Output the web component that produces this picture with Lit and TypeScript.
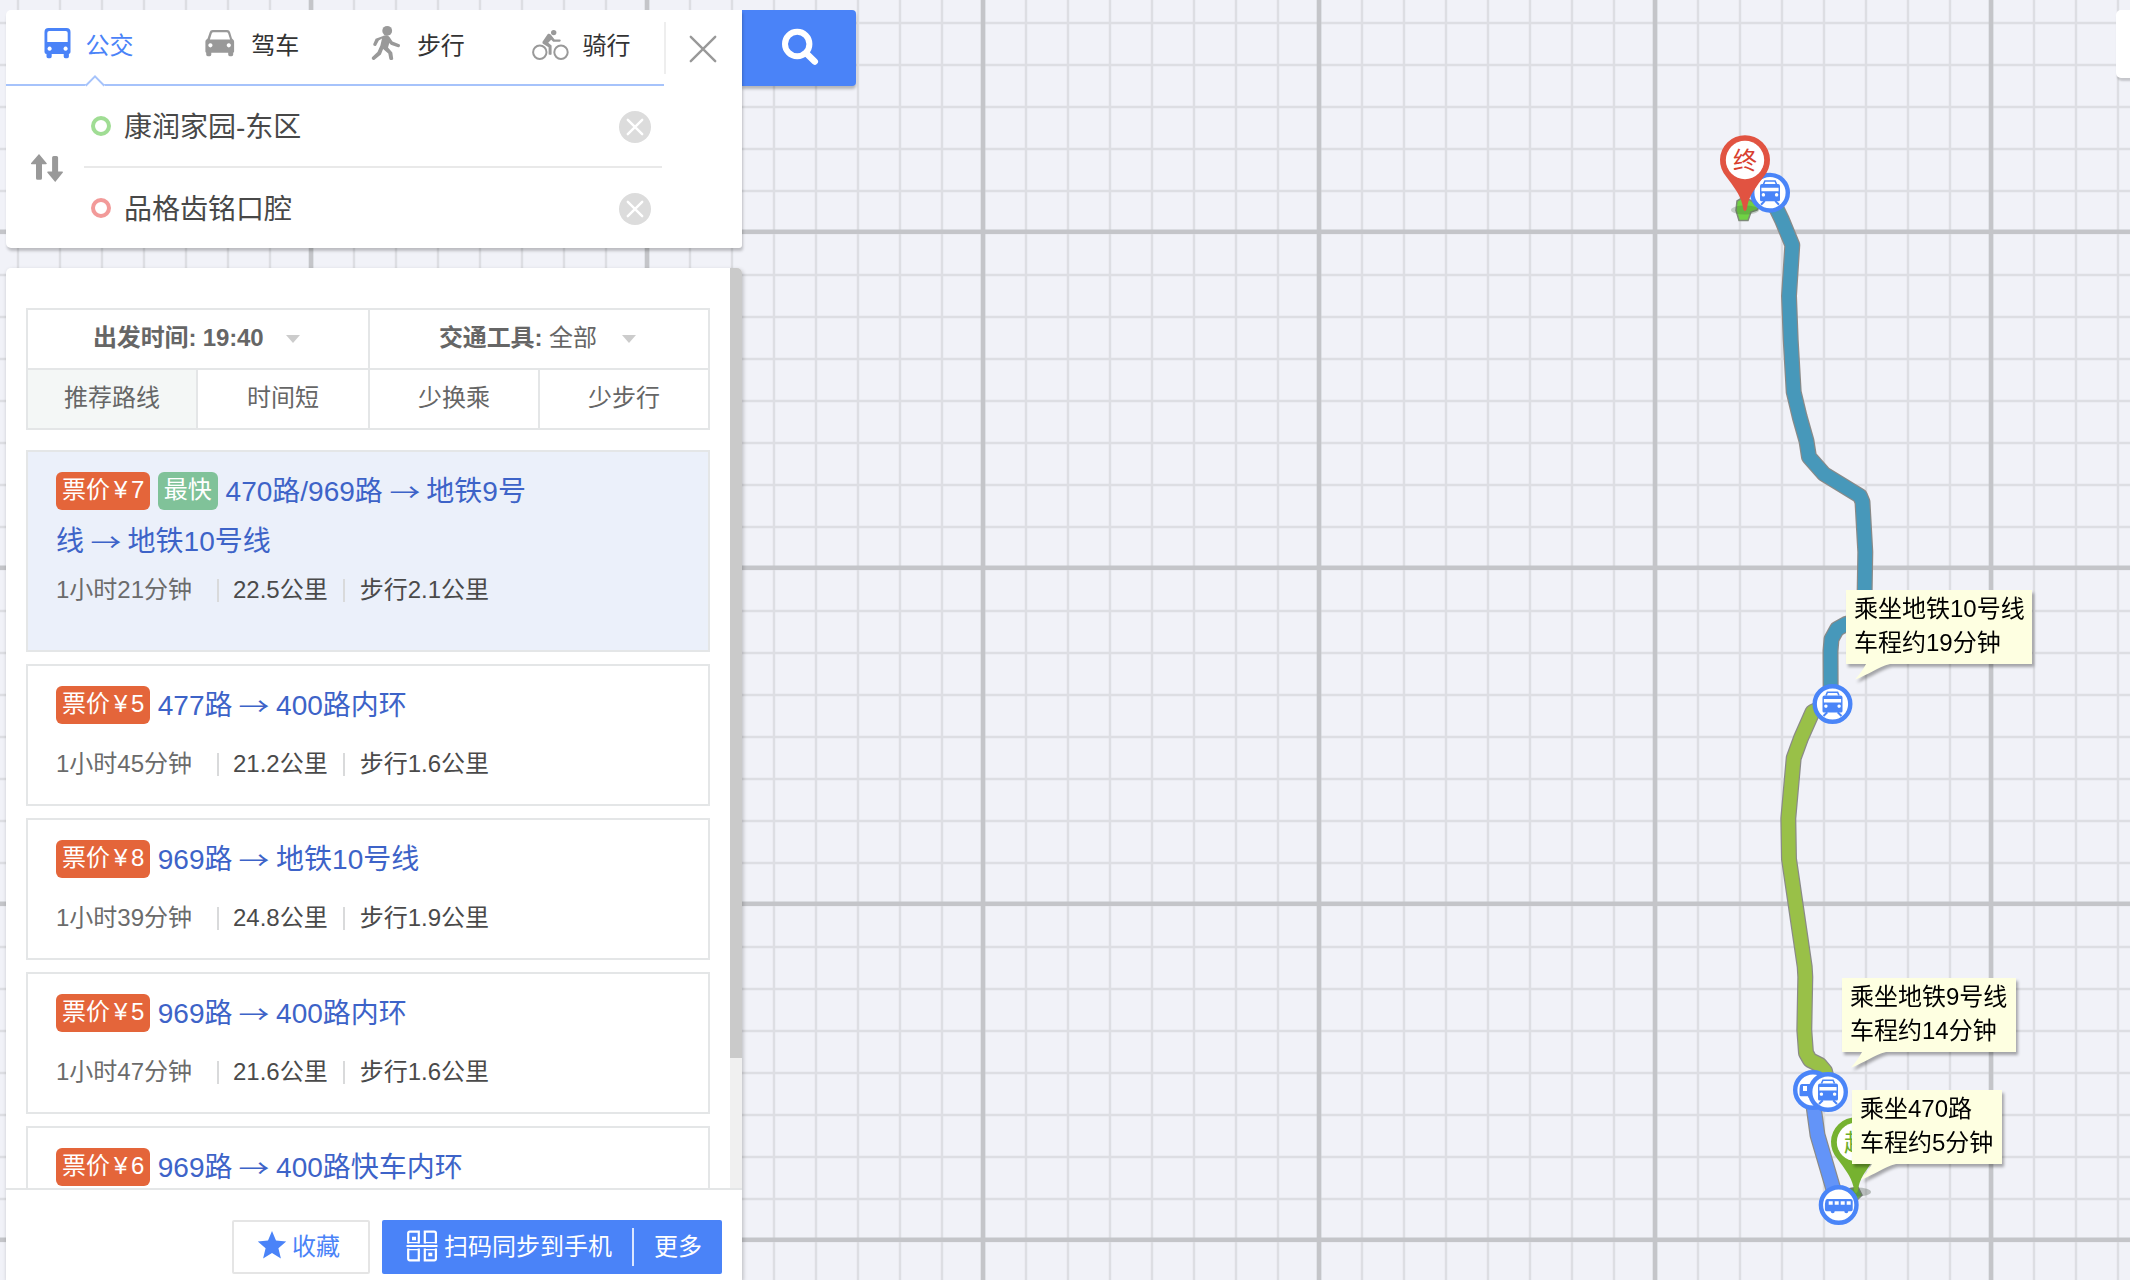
import { LitElement, html, css, svg, nothing } from "lit";
import { customElement, property } from "lit/decorators.js";
import { classMap } from "lit/directives/class-map.js";

interface Route {
  price: number;
  fastest?: boolean;
  steps: string[];
  time?: string;
  distance?: string;
  walk?: string;
  active?: boolean;
}

const ROUTES: Route[] = [
  { price: 7, fastest: true, active: true, steps: ["470路/969路", "地铁9号线", "地铁10号线"], time: "1小时21分钟", distance: "22.5公里", walk: "步行2.1公里" },
  { price: 5, steps: ["477路", "400路内环"], time: "1小时45分钟", distance: "21.2公里", walk: "步行1.6公里" },
  { price: 8, steps: ["969路", "地铁10号线"], time: "1小时39分钟", distance: "24.8公里", walk: "步行1.9公里" },
  { price: 5, steps: ["969路", "400路内环"], time: "1小时47分钟", distance: "21.6公里", walk: "步行1.6公里" },
  { price: 6, steps: ["969路", "400路快车内环"] },
];

const busIcon = svg`
  <path fill-rule="evenodd" d="M18.5 6h18a4 4 0 0 1 4 4v20a2 2 0 0 1-1.6 2v2.6a1.6 1.6 0 0 1-1.6 1.6h-2a1.6 1.6 0 0 1-1.6-1.6V32H21.7v2.6a1.6 1.6 0 0 1-1.6 1.6h-2a1.6 1.6 0 0 1-1.6-1.6V32a2 2 0 0 1-2-2V10a4 4 0 0 1 4-4z
    M19.3 9a2 2 0 0 0-2 2v9h20.4v-9a2 2 0 0 0-2-2z
    M19.6 24.6a2.1 2.1 0 1 0 .01 0z M35.6 24.6a2.1 2.1 0 1 0 .01 0z"/>`;
const carIcon = svg`
  <path fill-rule="evenodd" d="M17.6 8h14.6a3 3 0 0 1 2.9 2.2l1.9 6.3 1.5 1.6a2.5 2.5 0 0 1 .6 1.7v9.6a1.5 1.5 0 0 1-.9 1.4v1.8a1.6 1.6 0 0 1-1.6 1.6h-1.8a1.6 1.6 0 0 1-1.6-1.6v-1.9H16.3v1.9a1.6 1.6 0 0 1-1.6 1.6h-1.9a1.6 1.6 0 0 1-1.6-1.6v-1.9a1.5 1.5 0 0 1-.8-1.3v-9.6a2.5 2.5 0 0 1 .6-1.7l1.6-1.6 2.1-6.3A3 3 0 0 1 17.6 8z
    M18.4 10.2a1.8 1.8 0 0 0-1.7 1.2L14.9 17.6h20.2l-1.9-6.2a1.8 1.8 0 0 0-1.7-1.2z
    M15.4 21.2a2.1 2.1 0 1 0 .01 0z M33.8 21.2a2.1 2.1 0 1 0 .01 0z"/>`;
const walkIcon = svg`
  <circle cx="26.2" cy="8.8" r="4.9"/>
  <path d="M21.5 14.2c2.6-1.4 5.4-1 7 .8l3 4.6 6.8 2.6c1.4.7.6 3.4-1.2 3.1l-7.3-2.6-1.5-1.7-1.3 4.6 4.3 4.8.9 6.4c0 1.7-3.8 1.7-3.9 0l-1-5.2-5.2-4.6-2.2 5.4-6.4 5.4c-1.7.9-3.6-1.4-2.3-2.8l5.3-5 2.9-6.6 1.6-6.8-3.2 1.8-2.6 5c-.9 1.4-3.4.4-2.9-1.3l2.3-5.4z"/>`;
const bikeIcon = svg`
  <g transform="translate(1 0)"><g fill="none" stroke="currentColor" stroke-width="2"><circle cx="11.8" cy="30.3" r="6.7"/><circle cx="33" cy="30.3" r="6.7"/></g>
  <circle cx="25.7" cy="10.6" r="2.7"/>
  <path d="M19.6 12.2c1.2-.9 2.4-.5 3.3.6l3.7 4.6h5a1.1 1.1 0 0 1 0 2.3h-6.4l-2-2-3 3.1 3.4 2.6v8.6c0 1.2-3 1.2-3 0v-6.7l-5.2-3.2c-1.3-.9-1.2-2.3-.2-3.4z"/></g>`;

const TABS = [
  { label: "公交", icon: busIcon, active: true },
  { label: "驾车", icon: carIcon, active: false },
  { label: "步行", icon: walkIcon, active: false },
  { label: "骑行", icon: bikeIcon, active: false },
];

const fonts = css`"Liberation Sans", "Noto Sans CJK SC", sans-serif`;

@customElement("travel-tabs")
class TravelTabs extends LitElement {
  static styles = css`
    :host { display: flex; height: 74px; width: 658px; border-bottom: 2px solid #a6c3fb; position: relative; color: #333; }
    .tab { display: flex; align-items: flex-start; box-sizing: border-box; width: 165.7px; flex: none; height: 74px; padding: 12px 0 0 23.5px; font-size: 24px; line-height: 47px; }
    .tab svg { width: 56px; height: 46px; color: #999; fill: currentColor; flex: none; }
    .tab.active { color: #4a83f8; }
    .tab.active svg { color: #4a83f8; }
    .notch { position: absolute; left: 79px; top: 64px; width: 20px; height: 13px; }
  `;
  render() {
    return html`${TABS.map(
      (t) => html`<div class=${classMap({ tab: true, active: t.active })}>
        <svg viewBox="0 0 56 46">${t.icon}</svg><span>${t.label}</span>
      </div>`
    )}
      <svg class="notch" viewBox="0 0 20 13"><path d="M0 13V11.6L10 2l10 9.6V13z" fill="#fff"/><path d="M.7 11.8L10 2.4l9.3 9.4" fill="none" stroke="#a6c3fb" stroke-width="2"/></svg>`;
  }
}

@customElement("route-card")
class RouteCard extends LitElement {
  @property({ attribute: false }) route!: Route;
  static styles = css`
    :host { display: block; }
    .card { box-sizing: border-box; height: 142px; border: 2px solid #e4e6e7; padding: 15px 28px 0; background: #fff; }
    .card.active { height: 202px; background: #ebf0fa; }
    .title { font-size: 28px; line-height: 50px; width: 480px; color: #3d63c8; }
    .tag { display: inline-block; box-sizing: border-box; height: 38px; line-height: 36px; border-radius: 6px; padding: 0 6px; font-size: 24px; color: #fff; vertical-align: middle; position: relative; top: -3px; white-space: nowrap; }
    .price { background: #e4653a; width: 94px; }
    .yen { display: inline-block; width: 14px; margin: 0 3px 0 4px; }
    .fast { background: #80c299; width: 60px; }
    .arrow { display: inline-block; font-family: "Noto Sans CJK SC", sans-serif; line-height: 1; transform: translateY(2px) scale(1.1, 0.85); }
    .meta { display: flex; align-items: center; margin-top: 12px; height: 36px; font-size: 24px; color: #4a4a4a; white-space: nowrap; }
    .active .meta { margin-top: 2px; }
    .time { color: #6b6b6b; width: 161px; }
    .bar { width: 2px; height: 23px; background: #d9dadb; flex: none; margin-top: 6px; }
    .dist { padding: 0 15px 0 14px; }
    .walk { padding-left: 15px; }
  `;
  render() {
    const r = this.route;
    return html`<div class=${classMap({ card: true, active: !!r.active })}>
      <div class="title"><span class="tag price">票价<span class="yen">¥</span>${r.price}</span>${r.fastest ? html` <span class="tag fast">最快</span>` : nothing} ${r.steps.map((s, i) => html`${i ? html` <span class="arrow">→</span> ` : nothing}${s}`)}</div>
      ${r.time ? html`<div class="meta"><span class="time">${r.time}</span><i class="bar"></i><span class="dist">${r.distance}</span><i class="bar"></i><span class="walk">${r.walk}</span></div>` : nothing}
    </div>`;
  }
}

const seq = (start: number, step: number, end: number) => {
  const out: number[] = [];
  for (let v = start; v < end; v += step) out.push(v);
  return out;
};

const TEAL = "1770,195 1782,220 1792.3,245 1789,296 1790.7,340 1793.7,392 1799.7,417 1806.5,441 1809,457 1824,474 1860,496 1862.5,502 1865.3,552 1864.5,600 1860,620 1846,624 1837,629 1831.5,639 1830.5,651 1830.7,700";
const GREEN = "1830,704 1812.5,712 1801,738 1793.7,758 1788.3,818.5 1789,859 1804.7,966.7 1805.3,977 1804.3,1030 1806,1053 1810,1060 1820,1065 1825,1071 1828,1084";
const BLUE = "1812,1095 1817.5,1135 1838,1205";

const line = (points: string, color: string) => svg`
  <g fill="none" stroke-linejoin="round">
    <polyline points=${points} stroke="#8a8a88" stroke-width="16"/>
    <polyline points=${points} stroke=${color} stroke-width="13.6"/>
  </g>`;

const disc = svg`<circle r="17.8" fill="#fff" stroke="#4a85f8" stroke-width="4.4"/>`;
const metro = (x: number, y: number) => svg`
  <g transform="translate(${x} ${y})">${disc}
    <path d="M-6.5-8.5l1.4-3.2h10.2l1.4 3.2" fill="none" stroke="#4a85f8" stroke-width="1.6"/>
    <path fill="#4a85f8" fill-rule="evenodd" d="M-8-8.6H8a2 2 0 0 1 2 2V7a1.6 1.6 0 0 1-1.6 1.6H-8.4A1.6 1.6 0 0 1-10 7V-6.6a2 2 0 0 1 2-2z M-8.6-5v3.6H8.6V-5z M-6.6 .4a1.7 1.7 0 1 0 .01 0z M6.6 .4a1.7 1.7 0 1 0 .01 0z"/>
    <path d="M-5.2 8.2L-9 12M5.2 8.2L9 12" stroke="#4a85f8" stroke-width="2"/>
  </g>`;
const coach = (x: number, y: number) => svg`
  <g transform="translate(${x} ${y})">${disc}
    <path fill="#4a85f8" fill-rule="evenodd" d="M-11.4-6H12a2 2 0 0 1 2 2V4.6a1.6 1.6 0 0 1-1.6 1.6H9.6a2 2 0 0 1-4 0H-4a2 2 0 0 1-4 0h-4.2A1.6 1.6 0 0 1-13.8 4.6V-1l.6-3.4A2 2 0 0 1-11.4-6z M-10-3.8v3.6h4v-3.6z M-4-3.8v3.6h4v-3.6z M2-3.8v3.6h4v-3.6z M8-3.8v3.6h4v-3.6z"/>
  </g>`;
const shuttle = (x: number, y: number) => svg`
  <g transform="translate(${x} ${y})">${disc}
    <path fill="#4a85f8" fill-rule="evenodd" d="M-11-6H10V6.200H-1a2 2 0 0 1-4 0H-7H-12a1.500 1.500 0 0 1-1.500-1.500V-1L-13-4.400A2 2 0 0 1-11-6z M-10-4v5h4v-5z"/>
  </g>`;
const pin = (x: number, y: number, color: string, ink: string, text: string) => svg`
  <g transform="translate(${x} ${y})">
    <path d="M0 51C-1.6 51-2 48-2.6 44.5C-5 34-12 26-18.5 17A25 25 0 1 1 18.5 17C12 26 5 34 2.6 44.5C2 48 1.6 51 0 51z" fill=${color}/>
    <circle r="19.2" fill="#fff"/>
    <text class="pin" y="8.6" text-anchor="middle" fill=${ink}>${text}</text>
  </g>`;

const NOTES = [
  { x: 1846, y: 590, w: 186, lines: ["乘坐地铁10号线", "车程约19分钟"] },
  { x: 1842, y: 978, w: 174, lines: ["乘坐地铁9号线", "车程约14分钟"] },
  { x: 1852, y: 1090, w: 150, lines: ["乘坐470路", "车程约5分钟"] },
];

@customElement("route-map")
class RouteMap extends LitElement {
  static styles = css`
    :host { display: block; position: absolute; inset: 0; overflow: hidden; background: #f1f2f8; }
    .canvas { display: block; width: 2130px; height: 1280px; }
    .pin { font: 24px ${fonts}; }
    .note { position: absolute; box-sizing: border-box; height: 74px; padding: 2px 0 0 8px; background: #feffe1; color: #000; font-size: 24px; line-height: 34px; white-space: nowrap; filter: drop-shadow(2px 3px 1.5px rgba(0, 0, 0, 0.32)); }
    .note svg { position: absolute; left: 8px; top: 73.5px; width: 40px; height: 16px; fill: #feffe1; }
    .side { position: absolute; right: -10px; top: 10px; width: 24px; height: 68px; border-radius: 5px; background: #fff; box-shadow: 1px 3px 2px rgba(0, 0, 0, 0.18); }
  `;
  render() {
    return html`<svg class="canvas" viewBox="0 0 2130 1280">
        <g fill="none" stroke="#dddee3" stroke-width="2.4">
          ${seq(18, 42, 2130).map((x) => svg`<path d="M${x} 0V1280"/>`)}
          ${seq(23, 42, 1280).map((y) => svg`<path d="M0 ${y}H2130"/>`)}
        </g>
        <g fill="none" stroke="#c4c5c9" stroke-width="4.6">
          ${seq(311, 336, 2130).map((x) => svg`<path d="M${x} 0V1280"/>`)}
          ${seq(231.7, 336, 1280).map((y) => svg`<path d="M0 ${y}H2130"/>`)}
        </g>
        ${line(TEAL, "#4798ba")}${line(GREEN, "#99c048")}${line(BLUE, "#6394f8")}
        <path d="M1737 201l5-3 8 2 10 6-3 4-6 2-3 8.5h-9l-3-10z" fill="#70d244" stroke="#7d8a78" stroke-width="1.5"/>
        <ellipse cx="1745" cy="210" rx="14" ry="4.5" fill="rgba(60,90,50,.25)"/>
        <path d="M1848 1189l10-2 4 8-6 6v10" fill="#63b83c" stroke="#7d8a78" stroke-width="1.5"/>
        <ellipse cx="1856.5" cy="1192" rx="14.5" ry="4.5" fill="rgba(80,90,80,.34)"/>
        ${shuttle(1813, 1090)}${metro(1828, 1092)}${metro(1770, 192.7)}${metro(1832.5, 704)}
        ${pin(1745, 160, "#e15341", "#d8402f", "终")}${pin(1856, 1142, "#76b230", "#6fae2b", "起")}
        ${coach(1838.7, 1205)}
      </svg>
      ${NOTES.map(
        (n) => html`<div class="note" style="left:${n.x}px;top:${n.y}px;width:${n.w}px">
          ${n.lines.map((l) => html`<div>${l}</div>`)}
          <svg viewBox="0 0 40 16"><path d="M12 0C9 6 5 11 1 15.5C14 11 24 3 36 0z"/></svg>
        </div>`
      )}
      <div class="side"></div>`;
  }
}

@customElement("app-root")
class AppRoot extends LitElement {
  static styles = css`
    :host { display: block; position: relative; width: 2130px; height: 1280px; overflow: hidden; font-family: ${fonts}; }
    .column { position: relative; display: flex; flex-direction: column; gap: 20px; box-sizing: border-box; height: 1280px; width: 870px; padding: 10px 0 0 6px; }
    .top { display: flex; align-items: flex-start; }
    .query { position: relative; z-index: 1; display: flex; flex: none; box-sizing: border-box; width: 736px; height: 238px; background: #fff; border-radius: 5px 0 3px 5px; box-shadow: 1px 3px 3px rgba(0, 0, 0, 0.22); }
    .form { width: 658px; }
    .ends { display: grid; grid-template-columns: 78px 578px; }
    .swap { width: 78px; height: 162px; }
    .field { display: flex; align-items: center; height: 80px; font-size: 28px; color: #484848; }
    .field + .field { border-top: 2px solid #e9e9e9; }
    .ring { box-sizing: border-box; width: 20px; height: 20px; border-radius: 50%; border: 4px solid #a0dd94; margin: 0 13px 0 7px; }
    .ring.end { border-color: #f29a99; }
    .field span { flex: 1; padding-bottom: 2px; }
    .clear { width: 32px; height: 32px; margin: 2px 11px 0 0; }
    .exit { box-sizing: border-box; width: 78px; height: 52px; margin-top: 12px; border-left: 2px solid #eee; padding: 13px 0 0 23px; }
    .exit svg { display: block; width: 28px; height: 28px; }
    .search { display: flex; flex: none; align-items: center; justify-content: center; width: 114px; height: 76px; background: #4a83f8; border-radius: 0 4px 4px 0; box-shadow: 0 3px 3px rgba(0, 0, 0, 0.25); }
    .search svg { width: 38px; height: 38px; margin: 0 0 2px 2px; }
    .panel { display: flex; flex-direction: column; flex: 1; min-height: 0; width: 736px; background: #fff; border-radius: 5px 5px 0 0; box-shadow: 1px 2px 4px rgba(0, 0, 0, 0.25); }
    .scroller { display: flex; justify-content: space-between; height: 920px; overflow: hidden; border-radius: 5px 5px 0 0; }
    .content { width: 684px; padding: 40px 0 0 20px; }
    .filters { box-sizing: border-box; display: grid; grid-template-columns: 168px 170px 168px 168px; grid-template-rows: 58px 58px; width: 684px; height: 122px; border: 2px solid #e4e6e7; gap: 2px; background: #e4e6e7; font-size: 24px; color: #666; }
    .cell { display: flex; align-items: center; justify-content: center; background: #fff; padding-bottom: 7px; }
    .cell.wide { grid-column: span 2; justify-content: flex-start; padding-left: 65px; white-space: pre; }
    .cell.wide b { letter-spacing: -0.15px; }
    .cell.wide + .wide { padding-left: 69px; }
    .cell.on { background: #f4f7f6; }
    .caret { width: 0; height: 0; border: 7px solid transparent; border-top: 8px solid #ccc; border-bottom: 0; margin: 6px 0 0 23px; }
    .wide + .wide .caret { margin-left: 25px; }
    .list { display: flex; flex-direction: column; gap: 12px; margin-top: 20px; }
    .track { width: 12px; height: 920px; background: #f0f0f0; }
    .thumb { height: 790px; background: #cacaca; }
    .footer { display: flex; justify-content: flex-end; gap: 12px; box-sizing: border-box; height: 92px; border-top: 2px solid #e4e6e7; padding: 30px 20px 0 0; font-size: 24px; }
    .fav { display: flex; align-items: center; box-sizing: border-box; width: 138px; height: 54px; border: 2px solid #e5e5e5; border-radius: 2px; color: #4a83f8; padding-left: 23px; }
    .fav svg { width: 30px; height: 30px; margin: 0 5px 4px 0; }
    .send { display: flex; align-items: center; width: 340px; height: 54px; background: #4a83f8; border-radius: 2px; color: #fff; }
    .send svg { width: 32px; height: 32px; margin: 0 6px 2px 24px; }
    .sep { width: 2px; height: 38px; background: #dbe6fe; margin: 0 20px; }
    .footer span { padding-bottom: 6px; }
  `;
  private clear() {
    return html`<svg class="clear" viewBox="0 0 32 32"><circle cx="16" cy="16" r="16" fill="#dcdcdc"/><path d="M8.8 8.8l14.4 14.4M23.2 8.8L8.8 23.2" stroke="#fff" stroke-width="2.4" stroke-linecap="round"/></svg>`;
  }
  render() {
    return html`
      <route-map></route-map>
      <div class="column">
        <div class="top">
          <div class="query">
            <div class="form">
              <travel-tabs></travel-tabs>
              <div class="ends">
                <svg class="swap" viewBox="6 86 78 162" fill="#999"><path d="M39 154l7.7 9.2q.4 1-.8 1H42v14a1.6 1.6 0 0 1-1.6 1.6h-2.8A1.6 1.6 0 0 1 36 178.2v-14h-4.2q-1.2 0-.8-1z"/><path d="M55.2 182l-7.9-9.6q-.4-1 .8-1h4v-13.8a1.6 1.6 0 0 1 1.6-1.6h2.8a1.6 1.6 0 0 1 1.6 1.6v13.8h4q1.2 0 .8 1z"/></svg>
                <div class="fields">
                  <div class="field"><i class="ring"></i><span>康润家园-东区</span>${this.clear()}</div>
                  <div class="field"><i class="ring end"></i><span>品格齿铭口腔</span>${this.clear()}</div>
                </div>
              </div>
            </div>
            <div class="exit"><svg viewBox="0 0 28 28"><path d="M1.8 1.8l24.4 24.4M26.2 1.8L1.8 26.2" stroke="#999" stroke-width="2.4" stroke-linecap="round"/></svg></div>
          </div>
          <div class="search"><svg viewBox="0 0 38 38" fill="none" stroke="#fff"><circle cx="16.2" cy="16" r="12.2" stroke-width="6"/><path d="M25.5 25.5l8.2 8" stroke-width="6.6" stroke-linecap="round"/></svg></div>
        </div>
        <div class="panel">
          <div class="scroller">
            <div class="content">
              <div class="filters">
                <div class="cell wide"><b>出发时间: 19:40</b><i class="caret"></i></div>
                <div class="cell wide"><b>交通工具:</b> 全部<i class="caret"></i></div>
                <div class="cell on">推荐路线</div>
                <div class="cell">时间短</div>
                <div class="cell">少换乘</div>
                <div class="cell">少步行</div>
              </div>
              <div class="list">${ROUTES.map((r) => html`<route-card .route=${r}></route-card>`)}</div>
            </div>
            <div class="track"><div class="thumb"></div></div>
          </div>
          <div class="footer">
            <div class="fav"><svg viewBox="0 0 30 30" fill="#4a83f8"><path d="M15 1l4 9.6 10.2.8-7.8 6.8 2.5 10.2L15 22.9 6.1 28.4l2.5-10.2L.8 11.4l10.2-.8z"/></svg><span>收藏</span></div>
            <div class="send">
              <svg viewBox="0 0 32 32" fill="none" stroke="#fff" stroke-width="2.2"><path d="M2.2 13.5V3.2a1.5 1.5 0 0 1 1.5-1.5h9.1v11.8M18.8 13.5V1.7h9.6a1.5 1.5 0 0 1 1.5 1.5v10.3M2.2 18.5v10.3a1.5 1.5 0 0 0 1.5 1.5h9.1V18.5M18.8 18.5v11.8h9.6a1.5 1.5 0 0 0 1.5-1.5V18.5M.5 16h31"/><path d="M2.2 12.6h10.6M18.8 12.6h11.1M2.2 19.6h10.6M18.8 19.6h11.1" stroke-width="1.4"/><path d="M6 8.5h4M22.3 24.5h4" stroke-width="3.6"/></svg>
              <span>扫码同步到手机</span><i class="sep"></i><span>更多</span>
            </div>
          </div>
        </div>
      </div>`;
  }
}
